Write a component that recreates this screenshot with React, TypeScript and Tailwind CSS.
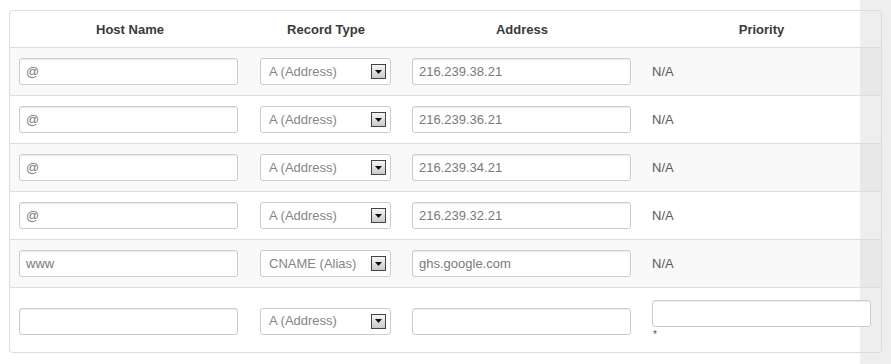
import React from 'react';

type Row = { host: string; type: string; address: string; priority?: string };

const rows: Row[] = [
  { host: '@', type: 'A (Address)', address: '216.239.38.21', priority: 'N/A' },
  { host: '@', type: 'A (Address)', address: '216.239.36.21', priority: 'N/A' },
  { host: '@', type: 'A (Address)', address: '216.239.34.21', priority: 'N/A' },
  { host: '@', type: 'A (Address)', address: '216.239.32.21', priority: 'N/A' },
  { host: 'www', type: 'CNAME (Alias)', address: 'ghs.google.com', priority: 'N/A' },
];

const TextBox: React.FC<{ value?: string; width?: string }> = ({ value, width = 'w-[219px]' }) => (
  <div
    className={`${width} h-[27px] flex items-center px-[6px] bg-white border border-[#cccccc] rounded-[3px] shadow-[inset_0_1px_1px_rgba(0,0,0,0.075)] text-[13px] text-[#7a7a7a]`}
  >
    {value}
  </div>
);

const SelectBox: React.FC<{ value: string }> = ({ value }) => (
  <div className="w-[131px] h-[27px] flex items-center justify-between pl-[8px] pr-[4px] bg-white border border-[#cccccc] rounded-[3px] text-[13px] text-[#858585]">
    <span>{value}</span>
    <span className="w-[15px] h-[15px] flex items-center justify-center border border-[#444] bg-[linear-gradient(to_bottom,#f6f6f6,#c9c9c9)]">
      <svg width="7" height="4" viewBox="0 0 7 4">
        <path d="M0 0h7L3.5 4z" fill="#111" />
      </svg>
    </span>
  </div>
);

const cols = 'grid grid-cols-[240px_152px_240px_1fr]';

export default function App() {
  return (
    <div className="w-[891px] h-[364px] pt-[10px] pl-[9px] bg-[linear-gradient(to_right,#ffffff_860px,#eeeeee_860px)] font-['Liberation_Sans',Arial,sans-serif]">
      <div className="w-[873px] border border-[#dddddd] rounded-[4px]">
        {/* header */}
        <div className={`${cols} h-[37px] items-center pt-[1px] border-b border-[#dddddd] text-[13px] font-bold text-[#3a3a3a]`}>
          <div className="text-center">Host Name</div>
          <div className="text-center">Record Type</div>
          <div className="text-center">Address</div>
          <div className="text-center">Priority</div>
        </div>

        {rows.map((r, i) => (
          <div
            key={i}
            className={`${cols} h-[48px] items-center border-b border-[#dddddd] ${i % 2 === 0 ? 'bg-black/[0.025]' : ''}`}
          >
            <div className="pl-[9px]">
              <TextBox value={r.host} />
            </div>
            <div className="pl-[10px]">
              <SelectBox value={r.type} />
            </div>
            <div className="pl-[10px]">
              <TextBox value={r.address} />
            </div>
            <div className="pl-[10px] text-[13px] text-[#5a5a5a]">{r.priority}</div>
          </div>
        ))}

        {/* new record row */}
        <div className={`${cols} h-[64px] items-center`}>
          <div className="pl-[9px] pt-[2px]">
            <TextBox />
          </div>
          <div className="pl-[10px] pt-[2px]">
            <SelectBox value="A (Address)" />
          </div>
          <div className="pl-[10px] pt-[2px]">
            <TextBox />
          </div>
          <div className="pl-[10px] flex flex-col">
            <TextBox width="w-[219px]" />
            <span className="text-[10px] leading-[12px] text-[#555] pl-[1px] mt-[2px]">*</span>
          </div>
        </div>
      </div>
    </div>
  );
}
